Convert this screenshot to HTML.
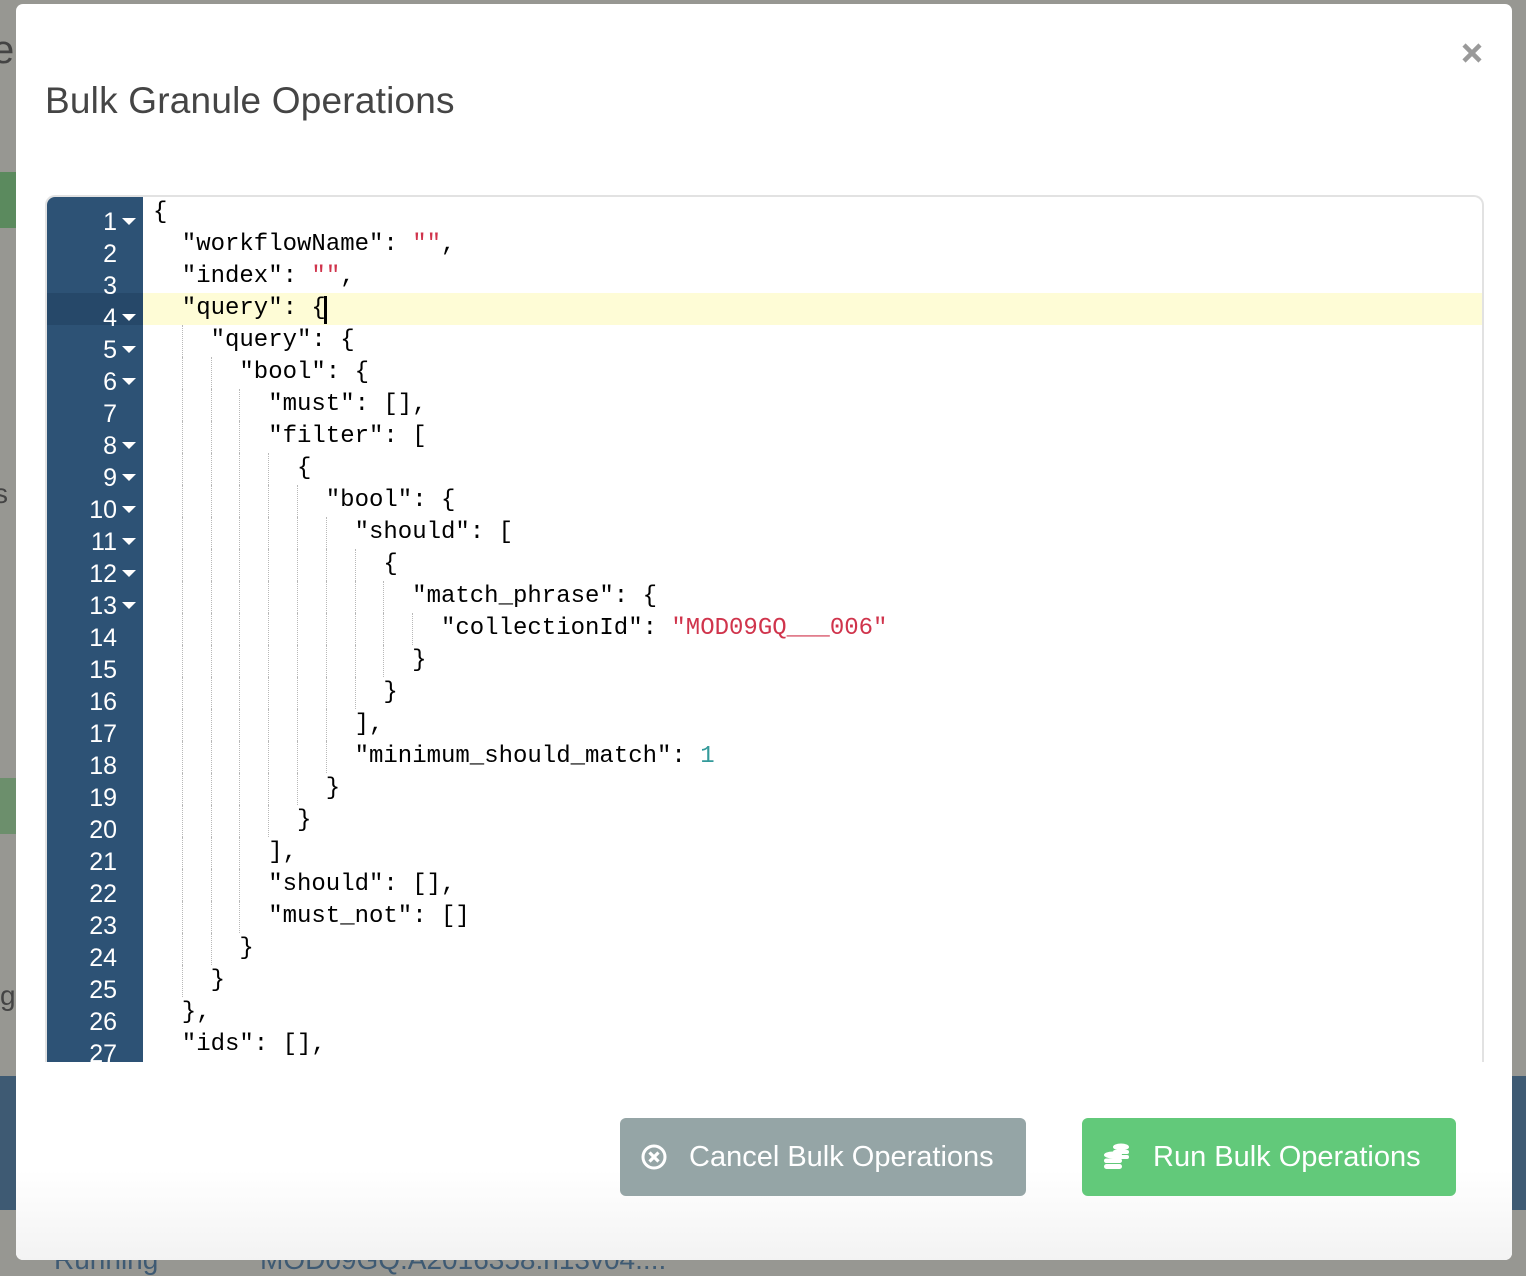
<!DOCTYPE html>
<html><head><meta charset="utf-8"><style>
*{margin:0;padding:0;box-sizing:border-box}
body{width:1526px;height:1271px;background:#979792;position:relative;overflow:hidden;font-family:"Liberation Sans",sans-serif}
.bg{position:absolute;color:#444;font-size:28px}
.modal{position:absolute;left:16px;top:4px;width:1496px;height:1256px;background:#fff;border-radius:7px;overflow:hidden}
.grad{position:absolute;left:0;right:0;bottom:0;height:90px;background:linear-gradient(#fff,#f3f3f3)}
h1{position:absolute;left:29px;top:76px;font-weight:normal;font-size:37px;color:#454545;letter-spacing:0.2px}
.close{position:absolute;left:1445px;top:38px;width:22px;height:22px}
.editor{position:absolute;left:29px;top:191px;width:1439px;height:867px;border:2px solid #e2e2e2;border-bottom:none;border-radius:10px 10px 0 0;overflow:hidden;background:#fff}
.gutter{position:absolute;left:0;top:0;width:96px;height:100%;background:#2d5275}
.hl{position:absolute;left:96px;top:96px;right:0;height:32px;background:#fefcd6}
.ghl{position:absolute;left:0;top:96px;width:96px;height:32px;background:#264869}
.ln{position:absolute;left:0;width:70px;text-align:right;color:#fff;font-family:"Liberation Sans",sans-serif;font-size:25px;line-height:32px}
.ar{position:absolute;left:75px;width:0;height:0;border-left:7px solid transparent;border-right:7px solid transparent;border-top:7px solid #fff}
.code{position:absolute;left:106px;top:0;font-family:"Liberation Mono",monospace;font-size:24px;line-height:32px;color:#000;white-space:pre}
.l{position:absolute;left:0;height:32px;white-space:pre}
.u{display:inline-block;width:28.8px;height:32px;vertical-align:top}
.g{border-left:1px dotted #b8b8b8}
.s{color:#d0344c}.n{color:#339a9a}
.btn{position:absolute;top:1114px;height:78px;border-radius:6px;color:#fff;font-size:29px;line-height:78px;z-index:2}
.cancel{left:604px;width:406px;background:#95a5a6}
.run{left:1066px;width:374px;background:#62c97a}
</style></head><body>
<div class="bg" style="left:-8px;top:28px;font-size:40px">e</div>
<div style="position:absolute;left:0;top:172px;width:16px;height:56px;background:#5b8a5e"></div>
<div style="position:absolute;left:0;top:778px;width:16px;height:56px;background:#6c8f6c"></div>
<div class="bg" style="left:-6px;top:478px">s</div>
<div class="bg" style="left:0;top:980px">g</div>
<div style="position:absolute;left:0;top:1076px;width:16px;height:134px;background:#3e5a73"></div>
<div style="position:absolute;left:1512px;top:1076px;width:14px;height:134px;background:#3e5a73"></div>
<div class="bg" style="left:54px;top:1244px;color:#3e5a73">Running</div>
<div class="bg" style="left:260px;top:1244px;color:#3e5a73">MOD09GQ.A2016358.h13v04....</div>
<div class="modal">
<div class="grad"></div>
<h1>Bulk Granule Operations</h1>
<svg class="close" viewBox="0 0 22 22"><path d="M3 3L19 19M19 3L3 19" stroke="#9a9a9a" stroke-width="4.5"/></svg>
<div class="editor">
<div class="gutter"></div><div class="ghl"></div><div class="hl"></div>
<div id="g"></div>
<div class="code" id="c"></div>
<div style="position:absolute;left:277px;top:99px;width:3px;height:28px;background:#000"></div>
</div>
<div class="btn cancel"><svg style="position:absolute;left:20px;top:25px" width="28" height="28" viewBox="0 0 28 28"><circle cx="14" cy="14" r="11" fill="none" stroke="#fff" stroke-width="3"/><path d="M9.5 9.5L18.5 18.5M18.5 9.5L9.5 18.5" stroke="#fff" stroke-width="3.2"/></svg><span style="position:absolute;left:69px">Cancel Bulk Operations</span></div>
<div class="btn run"><svg style="position:absolute;left:20px;top:24px" width="30" height="30" viewBox="0 0 30 30" fill="#fff"><ellipse cx="19" cy="5" rx="8" ry="3.5"/><rect x="11" y="8" width="16" height="4" rx="2"/><rect x="11" y="13" width="16" height="4" rx="2"/><ellipse cx="11" cy="13" rx="9" ry="3.5"/><rect x="2" y="16.5" width="18" height="4.5" rx="2.2"/><rect x="2" y="22" width="18" height="5" rx="2.5"/></svg><span style="position:absolute;left:71px">Run Bulk Operations</span></div>
</div>
<script>
var L=[[0,'{'],[1,'"workflowName": <s>""</s>,'],[1,'"index": <s>""</s>,'],[1,'"query": {'],[2,'"query": {'],[3,'"bool": {'],[4,'"must": [],'],[4,'"filter": ['],[5,'{'],[6,'"bool": {'],[7,'"should": ['],[8,'{'],[9,'"match_phrase": {'],[10,'"collectionId": <s>"MOD09GQ___006"</s>'],[9,'}'],[8,'}'],[7,'],'],[7,'"minimum_should_match": <n>1</n>'],[6,'}'],[5,'}'],[4,'],'],[4,'"should": [],'],[4,'"must_not": []'],[3,'}'],[2,'}'],[1,'},'],[1,'"ids": [],'],[1,'"operation": ""']];
var fold={1:1,4:1,5:1,6:1,8:1,9:1,10:1,11:1,12:1,13:1};
var c='',g='';
L.forEach(function(x,i){var t=i*32;var ind='';for(var k=0;k<x[0];k++)ind+='<span class="u'+(k>0?' g':'')+'"></span>';
var txt=x[1].replace(/<s>/g,'<span class="s">').replace(/<\/s>/g,'</span>').replace(/<n>/g,'<span class="n">').replace(/<\/n>/g,'</span>');
c+='<div class="l" style="top:'+t+'px">'+ind+txt+'</div>';
g+='<div class="ln" style="top:'+(t+9)+'px">'+(i+1)+'</div>';
if(fold[i+1])g+='<div class="ar" style="top:'+(t+21)+'px"></div>';});
document.getElementById('c').innerHTML=c;document.getElementById('g').innerHTML=g;
</script>
</body></html>
